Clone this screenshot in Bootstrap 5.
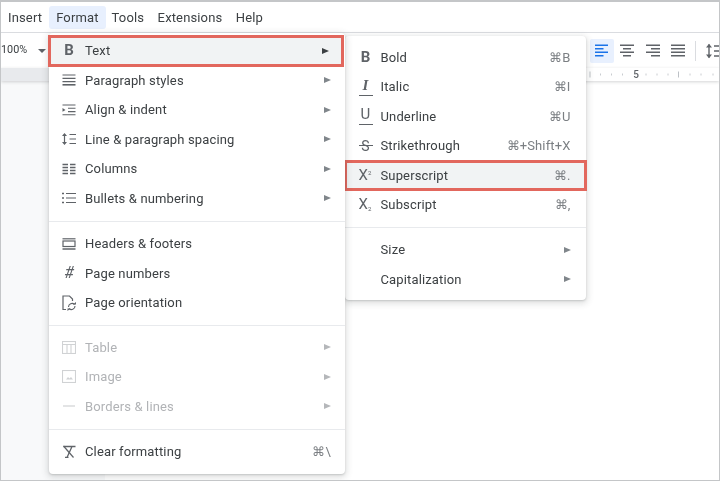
<!doctype html>
<html lang="en">
<head>
<meta charset="utf-8">
<title>Format menu</title>
<link href="https://cdn.jsdelivr.net/npm/bootstrap@5.3.0/dist/css/bootstrap.min.css" rel="stylesheet">
<style>
html,body{height:100%;margin:0;overflow:hidden;background:#fff}
body{font-family:Roboto,"Liberation Sans",sans-serif;color:#3c4043}
.frame{position:relative;height:481px;width:720px;border:1px solid #c4c6c8;border-top-width:2px;background:#fff;overflow:hidden;filter:blur(.3px)}
.topbar{height:31px;border-bottom:1px solid #dadce0;padding:4px 0 0 7px}
.topbar span{font-size:13px;letter-spacing:.14px;line-height:23px;height:23px;color:#3c4043;margin-right:13.5px}
.topbar .t-first{margin-right:7px}
.topbar .t-open{background:#e8f0fe;border-radius:3px;padding:0 7px;margin-right:6px}
.tools{height:35px;background:#fff}
.zoomval{font-size:10.8px;width:37px;color:#3c4043}
.caret{width:0;height:0;border-left:4px solid transparent;border-right:4px solid transparent;border-top:4px solid #5f6368}
.tool-btn{width:24px;height:24px;border-radius:2px;margin-right:1.4px}
.tool-btn.on{background:#e8f0fe}
.vsep{width:1px;height:20px;background:#dadce0;margin:0 10px 0 3.6px}
.spacing-icon{flex:none;margin-right:-4px}
.ruler{height:13px;background:#fff;box-shadow:0 1px 3px rgba(60,64,67,.22);position:relative;z-index:1}
.ruler-gray{width:48px;background:#e8eaed}
.ruler-num{font-size:10px;font-weight:500;color:#5f6368;line-height:13px}
.work{height:399px}
.gutter{width:104px;background:#f8f9fa}
.fmenu{display:block;position:absolute;border:0;border-radius:4px;background:#fff;box-shadow:0 2px 6px 2px rgba(60,64,67,.15),0 1px 2px rgba(60,64,67,.2);--bs-dropdown-min-width:0;margin:0}
.menu-main{left:48px;top:31px;width:296px;padding:3px 0 7.5px}
.menu-sub{left:343.5px;top:34px;width:241px;padding:6.7px 0 6.3px;z-index:2}
.fitem{height:29.5px;padding:0 14px 0 13px;font-size:13px;letter-spacing:.14px;color:#3c4043;line-height:1;--bs-dropdown-link-hover-bg:transparent}
.fitem.off{color:#b1b3b6}
.fitem.hit{background:#f1f3f4;outline:3px solid #e2675d;outline-offset:-2px;position:relative;z-index:3}
.menu-main .fitem.hit{width:294px}
.slot{width:23px;flex:none;display:flex;align-items:center;color:#5f6368}
.slot svg{display:block}
.glyph{width:14px;text-align:center;font-size:15px;line-height:1;color:#5f6368}
.gb{font-weight:700}
.gx{font-size:15px;font-weight:400;white-space:nowrap;text-align:left;line-height:1}
.gx sup,.gx sub{font-size:6px;font-weight:400}
.gx sup{top:-.9em}
.gx sub{bottom:-.2em}
.gu,.gi{padding-bottom:3px;background:linear-gradient(#5f6368,#5f6368) bottom/100% 1.3px no-repeat}
.gi{font-family:"Liberation Serif",serif;font-style:italic;font-weight:700}
.gl{font-size:14px;font-weight:400;background:linear-gradient(#5f6368,#5f6368) center/100% 1.1px no-repeat}
.gh{font-style:italic;font-size:16px}
.fkey{margin-left:auto;color:#7b7f83;font-size:13px}
.farrow{margin-left:auto;width:0;height:0;border-left:7px solid #80868b;border-top:3.5px solid transparent;border-bottom:3.5px solid transparent}
.hit .farrow{border-left-color:#3c4043}
.off .farrow{border-left-color:#b5b7ba}
.off .slot{color:#d0d2d4}
.fline{margin:7px 0;height:1px;background:#e8eaed;border:0;opacity:1}
.fline.wide{margin:7.5px 0}
.menu-sub .fline{margin:7.25px 0}
.menu-sub .fitem{padding:0 15px 0 14px}
.menu-sub .slot{width:22px}
</style>
</head>
<body>
<div class="frame d-flex flex-column">
  <div class="topbar d-flex align-items-start">
    <span class="t-first">Insert</span>
    <span class="t-open">Format</span>
    <span>Tools</span>
    <span>Extensions</span>
    <span>Help</span>
  </div>
  <div class="tools d-flex align-items-center">
    <div class="zoomval">100%</div>
    <div class="caret"></div>
    <div class="ms-auto d-flex align-items-center">
      <div class="tool-btn on d-flex align-items-center justify-content-center"><svg width="14" height="14" viewBox="0 0 14 14" stroke="#1a73e8" stroke-width="1.6"><path d="M0 1.2h13M0 4.7h8.5M0 8.2h13M0 11.8h8.5"/></svg></div>
      <div class="tool-btn d-flex align-items-center justify-content-center"><svg width="14" height="14" viewBox="0 0 14 14" stroke="#5f6368" stroke-width="1.6"><path d="M0 1.2h14M3 4.7h8M0 8.2h14M3 11.8h8"/></svg></div>
      <div class="tool-btn d-flex align-items-center justify-content-center"><svg width="14" height="14" viewBox="0 0 14 14" stroke="#5f6368" stroke-width="1.6"><path d="M0 1.2h14M5 4.7h9M0 8.2h14M5 11.8h9"/></svg></div>
      <div class="tool-btn d-flex align-items-center justify-content-center"><svg width="14" height="14" viewBox="0 0 14 14" stroke="#5f6368" stroke-width="1.6"><path d="M0 1.2h14M0 4.7h14M0 8.2h14M0 11.8h14"/></svg></div>
      <div class="vsep"></div>
      <svg class="spacing-icon" width="17" height="16" viewBox="0 0 17 16" fill="none" stroke="#5f6368" stroke-width="1.4"><path d="M3 1.5v13"/><path d="M0 4.500 3 .8 6 4.500zM0 11.500 3 15.200 6 11.500z" fill="#5f6368" stroke="none"/><path d="M8 3h9M8 8h9M8 13h9"/></svg>
    </div>
  </div>
  <div class="ruler d-flex">
    <div class="ruler-gray"></div>
    <div class="ms-auto d-flex align-items-center">
      <svg width="44" height="13" viewBox="0 0 44 13" stroke="#bdc1c6"><path d="M1 3.500v6"/><path d="M11.500 5.500v2M22.500 5.500v2M33.500 5.500v2" stroke="#c9ccd0"/></svg>
      <span class="ruler-num">5</span>
      <svg width="80" height="13" viewBox="0 0 80 13" stroke="#c9ccd0"><path d="M7 5.500v2M18 5.500v2M29 5.500v2"/><path d="M39.500 3.500v6" stroke="#bdc1c6"/><path d="M51 5.500v2M62 5.500v2M74 5.500v2"/></svg>
    </div>
  </div>
  <div class="work d-flex"><div class="gutter"></div></div>

  <div class="dropdown-menu fmenu menu-main">
    <div class="dropdown-item fitem hit d-flex align-items-center"><span class="slot"><span class="glyph gb">B</span></span>Text<i class="farrow"></i></div>
    <div class="dropdown-item fitem d-flex align-items-center"><span class="slot"><svg width="14" height="12" viewBox="0 0 14 12" stroke="#5f6368" stroke-width="1.2"><path d="M.5 1h13M.5 4.300h13M.5 7.600h13"/><path d="M.5 10.800h13" stroke-width="1.6"/></svg></span>Paragraph styles<i class="farrow"></i></div>
    <div class="dropdown-item fitem d-flex align-items-center"><span class="slot"><svg width="14" height="12" viewBox="0 0 14 12" stroke="#5f6368" stroke-width="1.1"><path d="M.5 1h13M6 4.300h7.500M6 7.600h7.500M.5 10.800h13"/><path d="M.5 4v3.800L3.500 6z" fill="#5f6368" stroke="none"/></svg></span>Align &amp; indent<i class="farrow"></i></div>
    <div class="dropdown-item fitem d-flex align-items-center"><span class="slot"><svg width="14" height="14" viewBox="0 0 14 14" fill="none" stroke="#5f6368" stroke-width="1.2"><path d="M2.500 2v10"/><path d="M0 4l2.500-3L5 4zM0 10l2.500 3L5 10z" fill="#5f6368" stroke="none"/><path d="M7.500 2.500h6.500M7.500 7h6.500M7.500 11.500h6.500"/></svg></span>Line &amp; paragraph spacing<i class="farrow"></i></div>
    <div class="dropdown-item fitem d-flex align-items-center"><span class="slot"><svg width="14" height="12" viewBox="0 0 14 12" stroke="#5f6368" stroke-width="1.3"><path d="M.5 1.500h5.500M8 1.500h5.500M.5 4.500h5.500M8 4.500h5.500M.5 7.500h5.500M8 7.500h5.500M.5 10.500h5.500M8 10.500h5.500"/></svg></span>Columns<i class="farrow"></i></div>
    <div class="dropdown-item fitem d-flex align-items-center"><span class="slot"><svg width="14" height="12" viewBox="0 0 14 12" stroke="#5f6368" stroke-width="1.2"><path d="M4 1.500h10M4 6h10M4 10.500h10"/><path d="M0 1.500h2M0 6h2M0 10.500h2" stroke-width="1.5"/></svg></span>Bullets &amp; numbering<i class="farrow"></i></div>
    <hr class="fline wide">
    <div class="dropdown-item fitem d-flex align-items-center"><span class="slot"><svg width="14" height="12" viewBox="0 0 14 12" fill="none" stroke="#5f6368" stroke-width="1.2"><path d="M.5 .8h13"/><rect x="1" y="3" width="12" height="5.500"/><path d="M.5 11h13" stroke-width="1.5"/></svg></span>Headers &amp; footers</div>
    <div class="dropdown-item fitem d-flex align-items-center"><span class="slot"><span class="glyph gh">#</span></span>Page numbers</div>
    <div class="dropdown-item fitem d-flex align-items-center"><span class="slot"><svg width="14" height="16" viewBox="0 0 14 16" fill="none" stroke="#5f6368" stroke-width="1.2"><path d="M4 14.500H1V1h6.500L10.500 4v2"/><path d="M6.500 12a3.500 3.500 0 0 1 6-2.500M13 11a3.500 3.500 0 0 1-6 2.500" stroke-width="1.1"/><path d="M11 9.500h3V7zM8.500 13.500h-3V16z" fill="#5f6368" stroke="none"/></svg></span>Page orientation</div>
    <hr class="fline">
    <div class="dropdown-item fitem off d-flex align-items-center"><span class="slot"><svg width="14" height="13" viewBox="0 0 14 13" fill="none" stroke="#d0d2d4" stroke-width="1.1"><rect x=".5" y=".5" width="13" height="12"/><path d="M.5 3.500h13M5 3.500v9M9 3.500v9"/></svg></span>Table<i class="farrow"></i></div>
    <div class="dropdown-item fitem off d-flex align-items-center"><span class="slot"><svg width="14" height="13" viewBox="0 0 14 13" fill="none" stroke="#d0d2d4" stroke-width="1.1"><rect x=".5" y=".5" width="13" height="12"/><path d="M4 9.500 6 7l1.500 1.500L9 7l2 2.500z" fill="#d0d2d4" stroke="none"/></svg></span>Image<i class="farrow"></i></div>
    <div class="dropdown-item fitem off d-flex align-items-center"><span class="slot"><svg width="14" height="4" viewBox="0 0 14 4" stroke="#d0d2d4" stroke-width="1.2"><path d="M1 2h12"/></svg></span>Borders &amp; lines<i class="farrow"></i></div>
    <hr class="fline wide">
    <div class="dropdown-item fitem d-flex align-items-center"><span class="slot"><svg width="14" height="13" viewBox="0 0 14 13" fill="none" stroke="#5f6368" stroke-width="1.3"><path d="M1.500 1.500h12M10 1.500 5 12.500M3 12.500h3.500"/><path d="M1.500 1 11.500 12.500" stroke-width="1.2"/></svg></span>Clear formatting<span class="fkey">⌘\</span></div>
  </div>

  <div class="dropdown-menu fmenu menu-sub">
    <div class="dropdown-item fitem d-flex align-items-center"><span class="slot"><span class="glyph gb">B</span></span>Bold<span class="fkey">⌘B</span></div>
    <div class="dropdown-item fitem d-flex align-items-center"><span class="slot"><span class="glyph gi">I</span></span>Italic<span class="fkey">⌘I</span></div>
    <div class="dropdown-item fitem d-flex align-items-center"><span class="slot"><span class="glyph gu">U</span></span>Underline<span class="fkey">⌘U</span></div>
    <div class="dropdown-item fitem d-flex align-items-center"><span class="slot"><span class="glyph gl">S</span></span>Strikethrough<span class="fkey">⌘+Shift+X</span></div>
    <div class="dropdown-item fitem hit d-flex align-items-center"><span class="slot"><span class="glyph gx">X<sup>2</sup></span></span>Superscript<span class="fkey">⌘.</span></div>
    <div class="dropdown-item fitem d-flex align-items-center"><span class="slot"><span class="glyph gx">X<sub>2</sub></span></span>Subscript<span class="fkey">⌘,</span></div>
    <hr class="fline">
    <div class="dropdown-item fitem d-flex align-items-center"><span class="slot"></span>Size<i class="farrow"></i></div>
    <div class="dropdown-item fitem d-flex align-items-center"><span class="slot"></span>Capitalization<i class="farrow"></i></div>
  </div>
</div>
<script src="https://cdn.jsdelivr.net/npm/bootstrap@5.3.0/dist/js/bootstrap.bundle.min.js"></script>
</body>
</html>
